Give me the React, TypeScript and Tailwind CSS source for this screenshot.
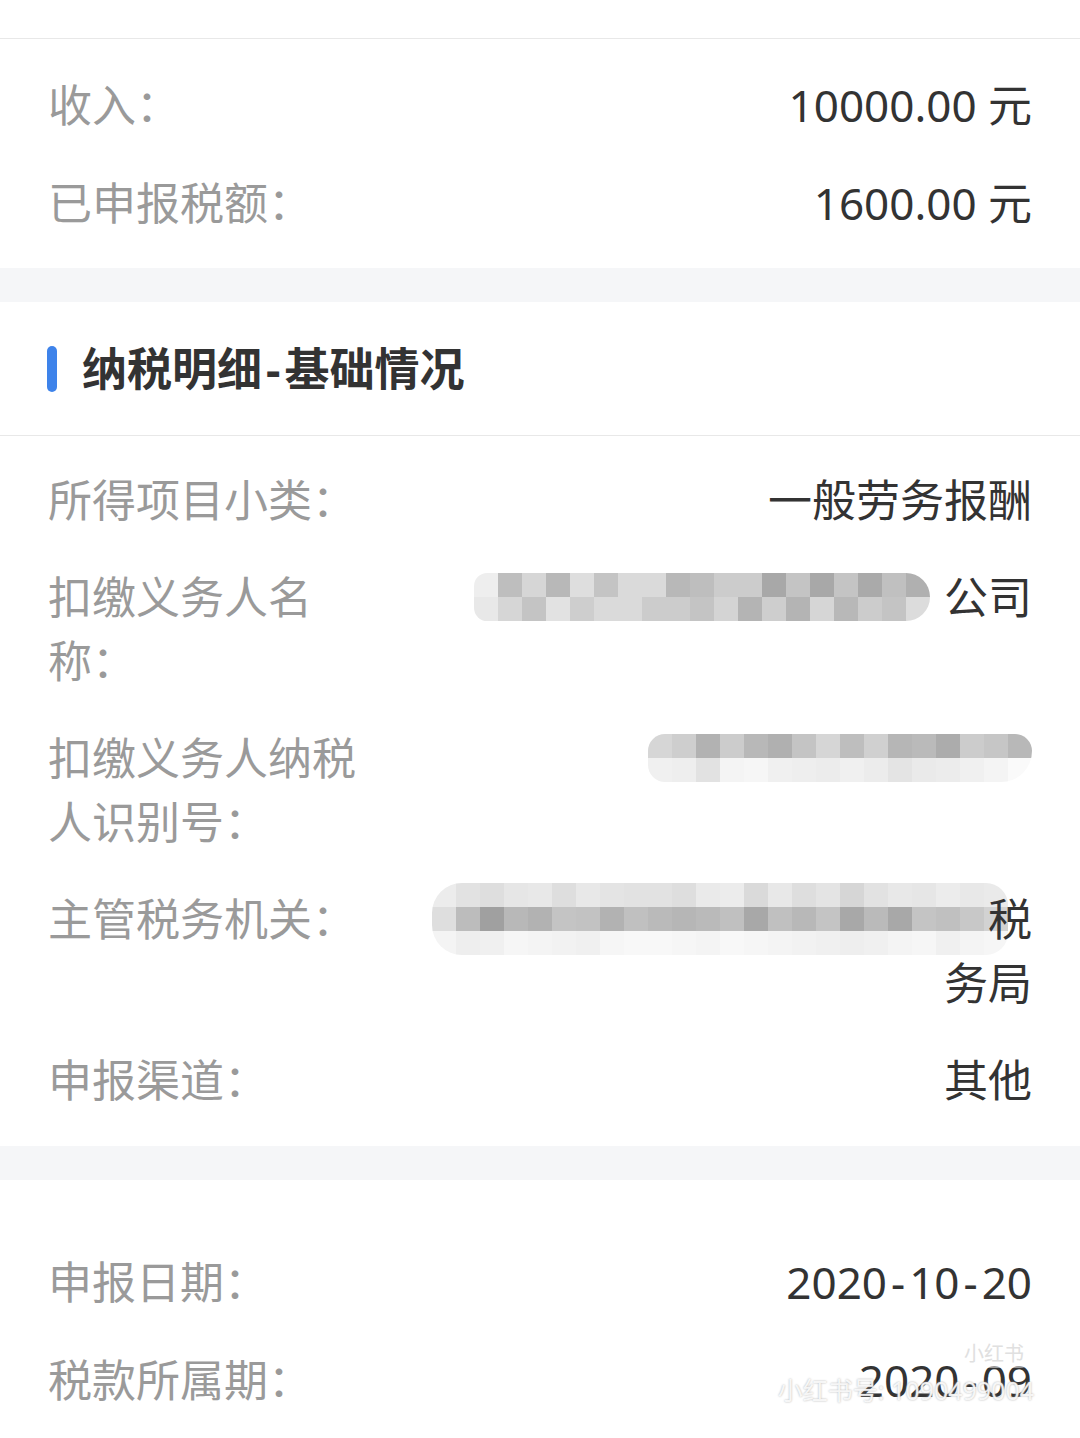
import type { ReactNode } from "react";

const font = "font-['Noto_Sans','Noto_Sans_CJK_SC',sans-serif]";

type MosaicProps = { rows: number[][]; className?: string };

function Mosaic({ rows, className }: MosaicProps) {
   return (
      <div className={`flex flex-col overflow-hidden rounded-[22px] ${className ?? ""}`}>
         {rows.map((row, i) => (
            <div key={i} className="flex">
               {row.map((g, j) => (
                  <div key={j} className="h-[24px] w-[24px]" style={{ backgroundColor: `rgb(${g},${g},${g})` }} />
               ))}
            </div>
         ))}
      </div>
   );
}

// the app draws a wider hyphen than our font does
function Dash() {
   return <span className="mx-[4px]">-</span>;
}

function Row({ label, children }: { label: ReactNode; children: ReactNode }) {
   return (
      <div className="flex items-start leading-[64px]">
         <div className="w-[330px] shrink-0 text-[#9a9a9a]">{label}</div>
         <div className="flex flex-1 flex-col items-end text-right text-[#333]">{children}</div>
      </div>
   );
}

const companyRows = [
   [238, 190, 214, 184, 222, 196, 218, 218, 184, 190, 204, 204, 168, 196, 168, 196, 170, 192, 176],
   [232, 214, 196, 226, 206, 218, 218, 204, 204, 196, 212, 180, 206, 180, 214, 184, 204, 196, 220],
];

const idRows = [
   [214, 206, 178, 204, 184, 176, 196, 214, 190, 208, 182, 186, 172, 204, 198, 184],
   [240, 238, 226, 244, 246, 240, 238, 236, 240, 236, 228, 234, 236, 240, 244, 250],
];

const officeRows = [
   [236, 226, 222, 230, 232, 222, 232, 228, 226, 226, 222, 234, 236, 218, 232, 222, 228, 214, 226, 232, 230, 236, 232, 234],
   [222, 188, 160, 184, 178, 196, 194, 178, 192, 186, 182, 186, 192, 168, 192, 184, 196, 168, 186, 168, 196, 192, 200, 210],
   [244, 238, 240, 246, 244, 242, 240, 246, 248, 248, 246, 244, 248, 246, 244, 242, 240, 238, 240, 244, 246, 240, 244, 246],
];

export default function App() {
   return (
      <div className={`min-h-[1438px] w-[1080px] bg-white text-[44px] ${font}`}>
         <div className="h-[39px] border-b border-[#e8e8e8]" />
         <section className="flex flex-col gap-[34px] px-[48px] pt-[34px] pb-[33px]">
            <Row label="收入：">10000.00 元</Row>
            <Row label="已申报税额：">1600.00 元</Row>
         </section>

         <div className="h-[34px] bg-[#f5f6f8]" />

         <header className="flex h-[134px] items-center gap-x-[25px] border-b border-[#e8e8e8] px-[47px]">
            <span className="h-[46px] w-[10px] rounded-full bg-[#3e83ea]" />
            <h2 className="text-[45px] font-bold text-[#333]">
               纳税明细<Dash />基础情况
            </h2>
         </header>

         <section className="flex flex-col gap-[33px] px-[48px] pt-[32px] pb-[34px]">
            <Row label="所得项目小类：">一般劳务报酬</Row>
            <Row label="扣缴义务人名称：">
               <div className="flex h-[64px] items-center">
                  <Mosaic rows={companyRows} className="mr-[14px] rounded-r-[40px]" />
                  <span>公司</span>
               </div>
            </Row>
            <Row label="扣缴义务人纳税人识别号：">
               <div className="flex h-[64px] items-center">
                  <Mosaic rows={idRows} className="rounded-br-[40px]" />
               </div>
            </Row>
            <Row label="主管税务机关：">
               <div className="flex h-[64px] items-center">
                  <Mosaic rows={officeRows} className="-mr-[20px] rounded-l-[30px]" />
                  <span>税</span>
               </div>
               <span>务局</span>
            </Row>
            <Row label="申报渠道：">其他</Row>
         </section>

         <div className="h-[34px] bg-[#f5f6f8]" />

         <section className="relative flex flex-col gap-[34px] px-[48px] pt-[70px] pb-[26px]">
            <Row label="申报日期：">
               <span>
                  2020<Dash />10<Dash />20
               </span>
            </Row>
            <Row label="税款所属期：">
               <span>
                  2020<Dash />09
               </span>
            </Row>
            <div className="absolute right-[46px] bottom-[70px] rounded-full bg-white/50 px-[10px] text-[20px] leading-[28px] text-[#e0e0e0]">
               小红书
            </div>
            <div className="absolute right-[46px] bottom-[32px] text-[25px] leading-[32px] text-white/85 [text-shadow:0_0_2px_#aaa]">
               小红书号: 1090499004
            </div>
         </section>
      </div>
   );
}
